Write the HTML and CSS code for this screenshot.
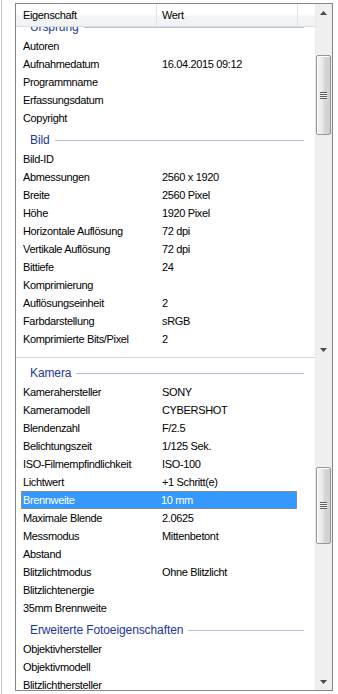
FILE: index.html
```html
<!DOCTYPE html>
<html lang="de">
<head>
<meta charset="utf-8">
<link rel="stylesheet" href="styles.css">
</head>
<body>
<div class="frame">
  <div class="listbox">
    <div class="pane pane-top">
      <div class="pane-main">
        <div class="header">
          <div class="hcell hcell-name">Eigenschaft</div>
          <div class="hcell hcell-value">Wert</div>
          <div class="hcell hcell-rest"></div>
        </div>
        <div class="viewport">
          <div class="rows rows-scrolled">
            <div class="group"><span class="group-label">Ursprung</span><span class="group-line"></span></div>
            <div class="row"><span>Autoren</span><span></span></div>
            <div class="row"><span>Aufnahmedatum</span><span>16.04.2015 09:12</span></div>
            <div class="row"><span>Programmname</span><span></span></div>
            <div class="row"><span>Erfassungsdatum</span><span></span></div>
            <div class="row"><span>Copyright</span><span></span></div>
            <div class="group"><span class="group-label">Bild</span><span class="group-line"></span></div>
            <div class="row"><span>Bild-ID</span><span></span></div>
            <div class="row"><span>Abmessungen</span><span>2560 x 1920</span></div>
            <div class="row"><span>Breite</span><span>2560 Pixel</span></div>
            <div class="row"><span>Höhe</span><span>1920 Pixel</span></div>
            <div class="row"><span>Horizontale Auflösung</span><span>72 dpi</span></div>
            <div class="row"><span>Vertikale Auflösung</span><span>72 dpi</span></div>
            <div class="row"><span>Bittiefe</span><span>24</span></div>
            <div class="row"><span>Komprimierung</span><span></span></div>
            <div class="row"><span>Auflösungseinheit</span><span>2</span></div>
            <div class="row"><span>Farbdarstellung</span><span>sRGB</span></div>
            <div class="row"><span>Komprimierte Bits/Pixel</span><span>2</span></div>
          </div>
        </div>
      </div>
      <div class="scrollbar">
        <div class="sb-btn"><svg width="7" height="4" viewBox="0 0 7 4"><path d="M3.5 0 L7 4 L0 4 Z" fill="#4a4a4a"/></svg></div>
        <div class="sb-track sb-track-top">
          <div class="thumb thumb-top"><span class="grip"></span></div>
        </div>
        <div class="sb-btn"><svg width="7" height="4" viewBox="0 0 7 4"><path d="M0 0 L7 0 L3.5 4 Z" fill="#4a4a4a"/></svg></div>
      </div>
    </div>
    <div class="pane pane-bottom">
      <div class="pane-main">
        <div class="viewport">
          <div class="rows rows-lower">
            <div class="group"><span class="group-label">Kamera</span><span class="group-line"></span></div>
            <div class="row"><span>Kamerahersteller</span><span>SONY</span></div>
            <div class="row"><span>Kameramodell</span><span>CYBERSHOT</span></div>
            <div class="row"><span>Blendenzahl</span><span>F/2.5</span></div>
            <div class="row"><span>Belichtungszeit</span><span>1/125 Sek.</span></div>
            <div class="row"><span>ISO-Filmempfindlichkeit</span><span>ISO-100</span></div>
            <div class="row"><span>Lichtwert</span><span>+1 Schritt(e)</span></div>
            <div class="row row-selected"><span>Brennweite</span><span>10 mm</span></div>
            <div class="row"><span>Maximale Blende</span><span>2.0625</span></div>
            <div class="row"><span>Messmodus</span><span>Mittenbetont</span></div>
            <div class="row"><span>Abstand</span><span></span></div>
            <div class="row"><span>Blitzlichtmodus</span><span>Ohne Blitzlicht</span></div>
            <div class="row"><span>Blitzlichtenergie</span><span></span></div>
            <div class="row"><span>35mm Brennweite</span><span></span></div>
            <div class="group"><span class="group-label">Erweiterte Fotoeigenschaften</span><span class="group-line"></span></div>
            <div class="row"><span>Objektivhersteller</span><span></span></div>
            <div class="row"><span>Objektivmodell</span><span></span></div>
            <div class="row"><span>Blitzlichthersteller</span><span></span></div>
          </div>
        </div>
      </div>
      <div class="scrollbar">
        <div class="sb-track sb-track-bottom">
          <div class="thumb thumb-bottom"><span class="grip"></span></div>
        </div>
        <div class="sb-btn"><svg width="7" height="4" viewBox="0 0 7 4"><path d="M0 0 L7 0 L3.5 4 Z" fill="#4a4a4a"/></svg></div>
      </div>
    </div>
  </div>
</div>
</body>
</html>
```

FILE: styles.css
```css
* { box-sizing: border-box; }

html, body {
  margin: 0;
  padding: 0;
  background: #ffffff;
}

body {
  width: 338px;
  height: 694px;
  overflow: hidden;
  font-family: "Liberation Sans", Arial, sans-serif;
  font-size: 11px;
  letter-spacing: -0.35px;
  color: #000000;
}

.frame {
  margin-left: 1px;
  height: 694px;
  border-left: 1px solid #c9c9c9;
  padding: 3px 0 0 13px;
}

.listbox {
  width: 318px;
  height: 688px;
  border: 1px solid #828790;
  display: flex;
  flex-direction: column;
  background: #ffffff;
}

.pane {
  display: flex;
}

.pane-top {
  height: 354px;
}

.pane-bottom {
  height: 332px;
}

.pane-main {
  flex: 1;
  display: flex;
  flex-direction: column;
  min-width: 0;
}

.pane-top .pane-main {
  border-bottom: 1px solid #d9d9d9;
}

.header {
  height: 23px;
  display: flex;
  border-bottom: 1px solid #dcdcdc;
  background: linear-gradient(to bottom, #ffffff 0%, #ffffff 45%, #f4f5f7 55%, #f1f2f4 100%);
}

.hcell {
  line-height: 22px;
}

.hcell-name {
  width: 141px;
  padding-left: 7px;
  border-right: 1px solid #e2e3e5;
}

.hcell-value {
  width: 141px;
  padding-left: 5px;
  border-right: 1px solid #e2e3e5;
}

.hcell-rest {
  flex: 1;
}

.viewport {
  flex: 1;
  overflow: hidden;
}

.rows {
  padding-left: 5px;
}

.rows-scrolled {
  margin-top: -13px;
}

.rows-lower {
  padding-top: 2px;
}

.row {
  width: 276px;
  height: 18px;
  line-height: 18px;
  display: grid;
  grid-template-columns: 139px 1fr;
  padding-left: 2px;
  white-space: nowrap;
}

.row-selected {
  background: #3399ff;
  color: #ffffff;
  border: 1px dotted #d9822b;
  line-height: 16px;
  padding-left: 1px;
}

.row-selected span:last-child {
  margin-left: -1px;
}

.group {
  height: 23px;
  width: 283px;
  display: flex;
  align-items: center;
  padding-left: 9px;
  padding-top: 3px;
}

.group-label {
  color: #2236a0;
  font-size: 12px;
  letter-spacing: -0.1px;
  white-space: nowrap;
}

.group-line {
  flex: 1;
  height: 1px;
  margin-left: 5px;
  background: #b4c1dc;
}

.scrollbar {
  width: 17px;
  display: flex;
  flex-direction: column;
  background: linear-gradient(to right, #e3e3e3 0px, #efefef 1px, #f0f0f0 16px, #e6e6e6 17px);
}

.sb-btn {
  height: 17px;
  display: flex;
  align-items: center;
  justify-content: center;
}

.sb-track {
  flex: 1;
  display: flex;
  flex-direction: column;
}

.sb-track-top {
  padding-top: 34px;
}

.sb-track-bottom {
  padding-top: 109px;
}

.thumb {
  margin: 0 1px;
  border: 1px solid #979797;
  border-radius: 2px;
  background: linear-gradient(to right, #f5f5f5 0%, #e8e8e8 45%, #d7d7d7 55%, #cfcfcf 100%);
  display: flex;
  align-items: center;
  justify-content: center;
  box-shadow: inset 1px 1px 0 #ffffff;
}

.thumb-top {
  height: 80px;
}

.thumb-bottom {
  height: 77px;
}

.grip {
  width: 7px;
  height: 7px;
  background: repeating-linear-gradient(to bottom, #5f5f5f 0px, #5f5f5f 1px, #f4f4f4 1px, #f4f4f4 2px);
}
```
